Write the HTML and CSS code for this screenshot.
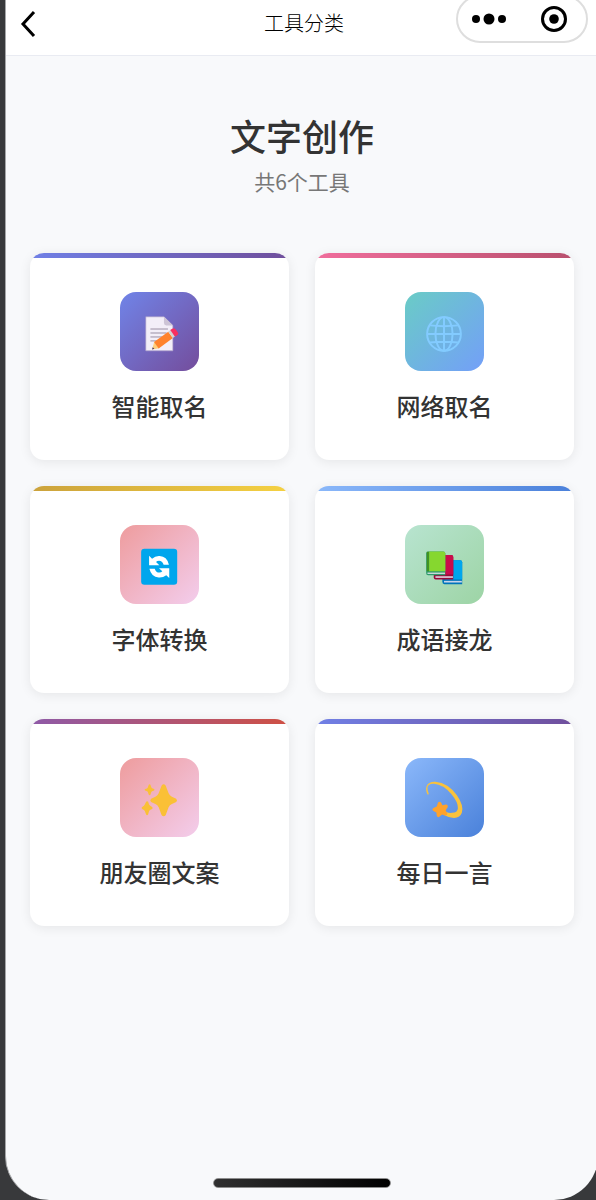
FILE: index.html
```html
<!DOCTYPE HTML>
<html lang="zh-CN">
<head>
<meta charset="utf-8">
<meta name="viewport" content="width=device-width, initial-scale=1">
<title>工具分类</title>
<link rel="stylesheet" href="styles.css">
</head>
<body>

<div class="phone">
<header class="navbar">
	<button class="back" type="button" aria-label="返回">
		<svg width="16" height="28" viewBox="0 0 16 28"><path d="M14 2L3 14l11 12" fill="none" stroke="#000" stroke-width="3"/></svg>
	</button>
	<span class="navbar_title">工具分类</span>
	<div class="capsule">
		<button type="button" aria-label="更多">
			<svg width="36" height="28" viewBox="0 0 36 28"><circle cx="5" cy="14" r="4"/><circle cx="18" cy="14" r="5.5"/><circle cx="31" cy="14" r="4"/></svg>
		</button>
		<button type="button" aria-label="关闭">
			<svg width="28" height="28" viewBox="0 0 28 28"><circle cx="14" cy="14" r="11.5" fill="none" stroke="#000" stroke-width="3"/><circle cx="14" cy="14" r="4.8"/></svg>
		</button>
	</div>
</header>

<main>
<div class="heading">
	<h1>文字创作</h1>
	<p>共6个工具</p>
</div>

<div class="tools">
	<a class="tool bar_indigo" href="#name">
		<span class="icon icon_indigo">
			<svg viewBox="15 16 239 239">
				<path d="M93 91h55l27 26v77H93z" fill="#f3eef8" stroke="#a99bc5" stroke-width="2"/>
				<path d="M148 91l27 26h-20q-7 0-7-7z" fill="#cdc4d6"/>
				<path d="M107 128h53M107 140h49M107 152h36M107 164h24" stroke="#998ea3" stroke-width="3"/>
				<path d="M112 190l7-24 14 20z" fill="#ffce7c"/>
				<path d="M112 190l2-7 5 5z" fill="#433b6b"/>
				<path d="M118 167l43-31 14 19-43 32z" fill="#ff822d"/>
				<path d="M161 136l7-5 14 19-7 5z" fill="#d3d3d3"/>
				<path d="M167 131l6-4q6-4 12 4l4 6q5 6-1 10l-7 4z" fill="#f92f60"/>
			</svg>
		</span>
		<span class="label">智能取名</span>
	</a>
	<a class="tool bar_pink" href="#netname">
		<span class="icon icon_teal">
			<svg viewBox="15 21 239 239">
				<g fill="none" stroke="#83cbff" stroke-width="6">
					<circle cx="133" cy="148" r="51"/>
					<ellipse cx="133" cy="148" rx="26" ry="51"/>
					<path d="M133 97v102M82 148h102M91 122q42 5 84 0M91 174q42-5 84 0"/>
				</g>
			</svg>
		</span>
		<span class="label">网络取名</span>
	</a>
	<a class="tool bar_gold" href="#font">
		<span class="icon icon_rose">
			<svg viewBox="15 16 239 239">
				<rect x="79" y="88" width="109" height="109" rx="10" fill="#00a6ed"/>
				<g fill="#fff">
					<path d="M103 109l9 9q10-9 23-8 22 1 28 26h-16q-4-12-14-12-6 0-9 4l10 10h-31z"/>
					<path d="M164 176l-9-8q-10 8-23 7-22-2-28-27h16q4 12 14 12 6 0 9-4l-10-9h31z"/>
				</g>
			</svg>
		</span>
		<span class="label">字体转换</span>
	</a>
	<a class="tool bar_blue" href="#idiom">
		<span class="icon icon_green">
			<svg viewBox="15 16 239 239">
				<path d="M134 123h48q6 0 6 6v66h-54q-6 0-6-7v-59q0-6 6-6z" fill="#0074ba"/>
				<path d="M137 123h45q6 0 6 6v52h-51z" fill="#00a6ed"/>
				<path d="M133 185h54v5h-54z" fill="#c9d4ea"/>
				<path d="M108 107h47q6 0 6 6v68h-53q-6 0-6-7v-61q0-6 6-6z" fill="#990838"/>
				<path d="M111 107h44q6 0 6 6v53h-50z" fill="#ca0b4a"/>
				<path d="M107 171h53v5h-53z" fill="#e0cfdb"/>
				<path d="M85 96h46q6 0 6 6v66H85q-6 0-6-7v-59q0-6 6-6z" fill="#2f9a6c"/>
				<path d="M88 96h43q6 0 6 6v54H88z" fill="#86d72f"/>
				<path d="M83 160h53v4H83z" fill="#d5dfe2"/>
				<path d="M84 97v59" stroke="#44911b" stroke-width="6"/>
			</svg>
		</span>
		<span class="label">成语接龙</span>
	</a>
	<a class="tool bar_red" href="#moments">
		<span class="icon icon_rose">
			<svg viewBox="15 16 239 239">
				<g fill="#fac036">
					<path d="M141 99q6-7 12 0l9 24q3 7 10 10l13 6q5 5 0 10l-13 6q-7 3-10 10l-9 24q-6 7-12 0l-9-24q-3-7-10-10l-13-6q-5-5 0-10l13-6q7-3 10-10z"/>
					<path d="M102 97q3-3 5 0l3 8q1 2 8 5 3 2 0 4-7 2-8 4l-3 9q-2 3-5 0l-3-9q-1-2-8-4-3-2 0-4 7-2 8-5z"/>
					<path d="M94 148q3-3 6 0l3 9q1 3 9 7 4 3 0 6-8 3-9 6l-3 11q-3 4-6 0l-4-11q-1-3-8-6-4-3 0-6 7-3 8-7z"/>
				</g>
			</svg>
		</span>
		<span class="label">朋友圈文案</span>
	</a>
	<a class="tool bar_indigo" href="#daily">
		<span class="icon icon_blue">
			<svg viewBox="15 16 239 239">
				<path d="M84 127q-8-14-4-25 6-15 27-14 39 4 65 41 22 32 15 53-6 17-28 15-14-1-27-9l7-9q11 4 18 3 17 0 18-14 1-18-20-43-25-29-52-31-18-1-20 11-1 8 4 20z" fill="#f9c23c"/>
				<path d="M115 151q4-5 9 0l4 8 11-2q7 0 5 8l-6 9 5 10q1 7-7 6l-9-3-8 7q-6 3-8-4l-1-9-9-5q-6-5 0-9l10-4z" fill="#ffa22b"/>
			</svg>
		</span>
		<span class="label">每日一言</span>
	</a>
</div>
</main>

<div class="home_bar"></div>
</div>

</body>
</html>
```
FILE: styles.css
```css
* {
	box-sizing:border-box;
}
body {
	margin:0;
	background-color:#38393b;
	font-family:"Noto Sans CJK SC", sans-serif;
	color:#333333;
	overflow-x:hidden;
}
/* the screen runs slightly past the right edge of the window */
.phone {
	display:flex;
	flex-direction:column;
	min-height:100vh;
	margin-left:5px;
	margin-right:-2px;
	border-left:1px solid #a5a6a8;
	border-radius:0 0 44px 44px;
	background-color:#f8f9fb;
	overflow:hidden;
}
button {
	display:flex;
	padding:0;
	border:none;
	background:none;
	cursor:pointer;
}

.navbar {
	display:grid;
	grid-template-columns:1fr auto 1fr;
	height:56px;
	padding:0 10px 0 14px;
	background-color:#ffffff;
	border-bottom:1px solid #e9ebf2;
}
.back {
	justify-self:start;
	margin-top:10px;
}
.navbar_title {
	margin-top:8px;
	font-size:20px;
	line-height:30px;
	font-weight:300;
	color:#000000;
}
.capsule {
	display:flex;
	align-items:center;
	justify-content:space-between;
	justify-self:end;
	width:132px;
	height:48px;
	margin-top:-5px;
	padding:0 18px 0 13px;
	border:2px solid #dedede;
	border-radius:24px;
}

main {
	flex:1;
	padding:52px 24px 24px;
}
.heading {
	text-align:center;
}
h1 {
	margin:0;
	font-size:36px;
	line-height:54px;
	font-weight:500;
}
.heading p {
	margin:4px 0 0;
	font-size:21px;
	line-height:30px;
	color:#777777;
}

.tools {
	display:grid;
	grid-template-columns:1fr 1fr;
	gap:26px;
	margin-top:57px;
}
.tool {
	display:flex;
	flex-direction:column;
	align-items:center;
	padding:39px 12px 36px;
	border-radius:14px;
	background-color:#ffffff;
	background-size:100% 5px;
	background-repeat:no-repeat;
	box-shadow:0 2px 12px rgba(0,0,0,0.08);
	color:#333333;
	text-decoration:none;
}
.icon {
	width:79px;
	height:79px;
	border-radius:16px;
}
.icon svg {
	display:block;
	width:100%;
}
.label {
	margin-top:17px;
	font-size:24px;
	line-height:36px;
	font-weight:500;
}

.bar_indigo {
	background-image:linear-gradient(90deg, #7080e6, #704f9c);
}
.bar_pink {
	background-image:linear-gradient(90deg, #f06d9c, #b9506e);
}
.bar_gold {
	background-image:linear-gradient(90deg, #cba23c, #f5d142);
}
.bar_blue {
	background-image:linear-gradient(90deg, #8bb8fa, #4a80da);
}
.bar_red {
	background-image:linear-gradient(90deg, #8e5aa8, #cf5044);
}

.icon_indigo {
	background:linear-gradient(135deg, #7084e8, #744d9c);
}
.icon_teal {
	background:linear-gradient(135deg, #6accc6, #739ff8);
}
.icon_rose {
	background:linear-gradient(135deg, #ee9c9d, #f3cdec);
}
.icon_green {
	background:linear-gradient(135deg, #b8e4d0, #9dd4a5);
}
.icon_blue {
	background:linear-gradient(135deg, #8bb8fa, #4a81da);
}

.home_bar {
	align-self:center;
	width:178px;
	height:10px;
	margin-bottom:12px;
	border:1px solid #8d8d8d;
	border-radius:5px;
	background:linear-gradient(90deg, #303030, #000000);
}
```
